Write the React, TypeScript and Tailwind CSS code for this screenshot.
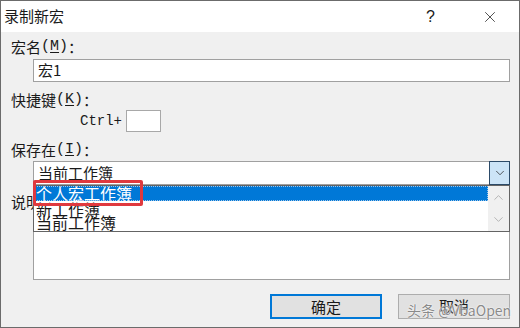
import { ChevronDown, ChevronUp, X } from 'lucide-react';

const cjk = { fontFamily: '"Noto Sans CJK SC", "Noto Sans", sans-serif' };
const mono = { fontFamily: '"Liberation Mono", "DejaVu Sans Mono", monospace' };

function Label({ text, hotkey }: { text: string; hotkey: string }) {
  return (
    <div className="h-[18px] flex items-center text-[15px] leading-[18px] text-[#1a1a1a] whitespace-nowrap" style={cjk}>
      <span>{text}</span>
      <span style={mono}>
        (<span className="underline underline-offset-2">{hotkey}</span>)
      </span>
      <span>：</span>
    </div>
  );
}

export default function App() {
  return (
    <div
      className="relative w-[520px] h-[328px] flex flex-col border border-[#6b6b6b] bg-[#f0f0f0] overflow-hidden"
      style={cjk}
    >
      {/* title bar */}
      <div className="h-[31px] shrink-0 bg-white flex items-center pl-[3px] pr-[20px]">
        <span className="text-[15px] text-[#1a1a1a] flex-1">录制新宏</span>
        <span className="text-[16px] text-[#1a1a1a] mr-[46px]" style={{ fontFamily: '"Liberation Sans", sans-serif' }}>?</span>
        <X className="w-[18px] h-[18px] text-[#1a1a1a]" strokeWidth={1} />
      </div>

      {/* body */}
      <div className="flex-1 flex flex-col pl-[10px] pr-[9px] pt-[6px]">
        <Label text="宏名" hotkey="M" />
        <div className="mt-[3px] ml-[22px] h-[23px] bg-white border border-[#a0a0a0] flex items-center pl-[4px] text-[15px] text-[#1a1a1a]">
          宏1
        </div>

        <div className="mt-[9px]">
          <Label text="快捷键" hotkey="K" />
        </div>
        <div className="mt-[1px] ml-[69px] flex items-center gap-[4px]">
          <span className="text-[14px] text-[#1a1a1a]" style={mono}>Ctrl+</span>
          <div className="w-[35px] h-[22px] bg-white border border-[#a8a8a8]" />
        </div>

        <div className="mt-[9px]">
          <Label text="保存在" hotkey="I" />
        </div>
        <div className="mt-[2px] ml-[22px] h-[24px] bg-white border border-[#a0a0a0] flex items-center">
          <span className="flex-1 pl-[4px] text-[15px] text-[#1a1a1a]">当前工作簿</span>
          <div className="w-[21px] h-[24px] -my-px -mr-px bg-[#cce4f7] border border-[#2c4a68] flex items-center justify-center">
            <ChevronDown className="w-[14px] h-[14px] text-[#1a1a1a]" strokeWidth={1.2} />
          </div>
        </div>

        <div className="mt-[8px]">
          <Label text="说明" hotkey="D" />
        </div>
        <div className="mt-[2px] ml-[22px] h-[67px] bg-white border border-[#a0a0a0]" />

        <div className="mt-[14px] flex justify-end gap-[16px]">
          <button className="w-[112px] h-[25px] bg-[#e1e1e1] border-2 border-[#0078d7] text-[15px] text-[#1a1a1a]">
            确定
          </button>
          <button className="w-[112px] h-[25px] bg-[#e1e1e1] border border-[#adadad] text-[15px] text-[#1a1a1a]">
            取消
          </button>
        </div>
      </div>

      {/* open drop-down list */}
      <div className="absolute left-[32px] top-[184px] w-[477px] h-[47px] bg-white border border-[#646464] flex">
        <div className="flex-1 flex flex-col text-[16px] text-[#1a1a1a]">
          <div className="relative z-10 h-[15px] leading-[15px] bg-[#0078d7] text-white pl-[2px] outline-1 outline-dotted outline-[#9fc6ea] -outline-offset-1">
            个人宏工作簿
          </div>
          <div className="h-[14px] leading-[16px] pl-[2px]">新工作簿</div>
          <div className="h-[15px] leading-[15px] pl-[2px]">当前工作簿</div>
        </div>
        <div className="w-[21px] bg-[#f0f0f0] flex flex-col items-center justify-around">
          <ChevronUp className="w-[15px] h-[15px] text-[#a6a6a6]" strokeWidth={1.3} />
          <ChevronDown className="w-[15px] h-[15px] text-[#a6a6a6]" strokeWidth={1.3} />
        </div>
      </div>

      {/* red highlight */}
      <div className="absolute left-[32px] top-[179px] w-[110px] h-[26px] border-[3px] border-[#e0393e] rounded-[2px] z-20" />

      {/* watermark */}
      <div
        className="absolute left-[406px] top-[300px] whitespace-nowrap text-[14px] leading-[18px] text-[#8a8a8a] [text-shadow:0_0_2px_#ffffff,0_0_1px_#ffffff] z-20"
        style={{ fontFamily: '"Noto Sans CJK SC", "Liberation Sans", sans-serif' }}
      >
        头条 @VbaOpen
      </div>
    </div>
  );
}
